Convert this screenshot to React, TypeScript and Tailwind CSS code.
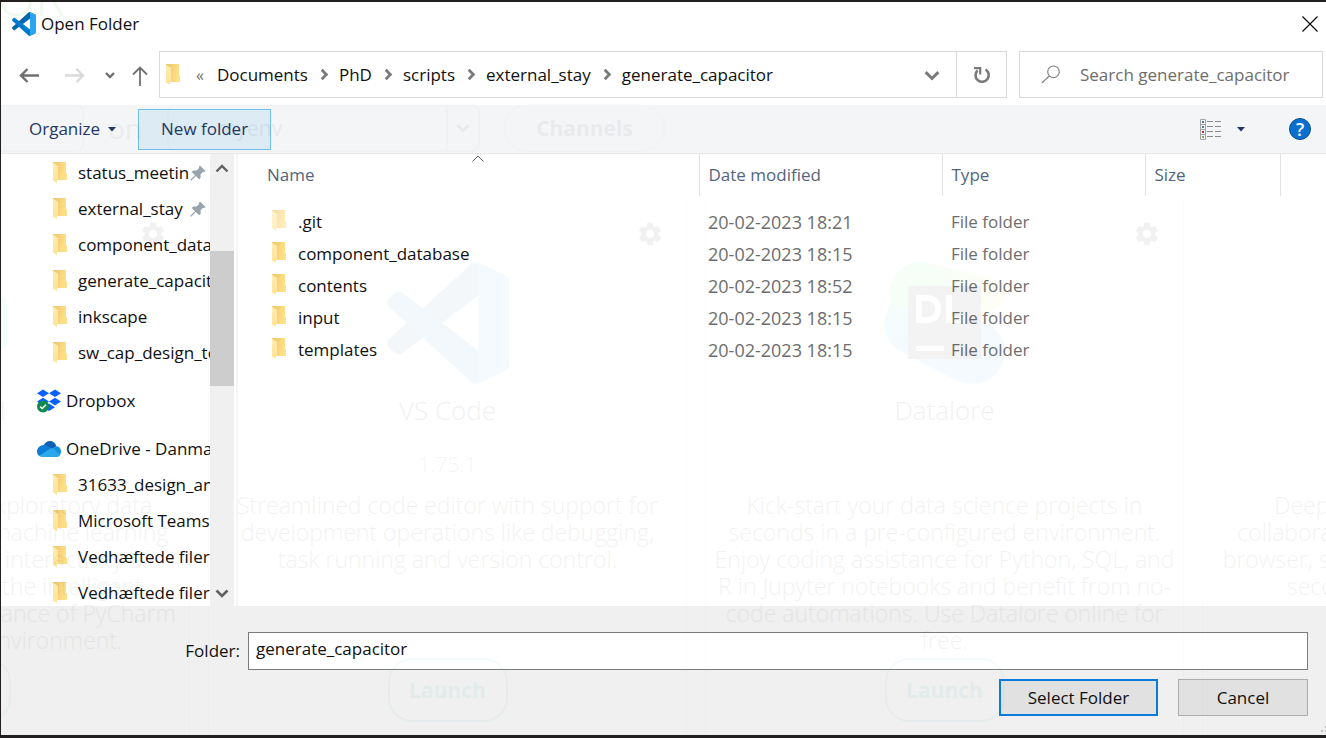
import React from "react";
import { MdSettings } from "react-icons/md";

const crumbs = ["Documents", "PhD", "scripts", "external_stay", "generate_capacitor"];

const quickAccess = [
  { name: "status_meetin", pinned: true },
  { name: "external_stay", pinned: true },
  { name: "component_database", pinned: false },
  { name: "generate_capacitor", pinned: false },
  { name: "inkscape", pinned: false },
  { name: "sw_cap_design_tool", pinned: false },
];

const oneDrive = ["31633_design_and", "Microsoft Teams", "Vedhæftede filer", "Vedhæftede filer"];

const files = [
  { name: ".git", date: "20-02-2023 18:21", hidden: true },
  { name: "component_database", date: "20-02-2023 18:15", hidden: false },
  { name: "contents", date: "20-02-2023 18:52", hidden: false },
  { name: "input", date: "20-02-2023 18:15", hidden: false },
  { name: "templates", date: "20-02-2023 18:15", hidden: false },
];

const apps = [
  {
    name: "DataSpell",
    version: "",
    logo: "dataspell",
    lines: [
      "DataSpell is an IDE for exploratory data",
      "analysis and prototyping machine learning",
      "models. It combines the interactivity of",
      "Jupyter notebooks with the intelligent",
      "Python and R coding assistance of PyCharm",
      "in one user-friendly environment.",
    ],
  },
  {
    name: "VS Code",
    version: "1.75.1",
    logo: "vscode",
    lines: [
      "Streamlined code editor with support for",
      "development operations like debugging,",
      "task running and version control.",
    ],
  },
  {
    name: "Datalore",
    version: "",
    logo: "datalore",
    lines: [
      "Kick-start your data science projects in",
      "seconds in a pre-configured environment.",
      "Enjoy coding assistance for Python, SQL, and",
      "R in Jupyter notebooks and benefit from no-",
      "code automations. Use Datalore online for",
      "free.",
    ],
  },
  {
    name: "Deepnote",
    version: "",
    logo: "none",
    lines: [
      "Deepnote is a notebook built for",
      "collaboration. Create notebooks in your",
      "browser, spin up your own environment in",
      "seconds and share with a link.",
    ],
  },
];

function FolderIcon({ className = "" }: { className?: string }) {
  return (
    <svg className={"h-[21px] w-[14px] shrink-0 " + className} viewBox="0 0 14 21" aria-hidden="true">
      <defs>
        <linearGradient id="folderBack" x1="0" x2="1" y1="0" y2="0.3">
          <stop offset="0" stopColor="#eec666" />
          <stop offset="1" stopColor="#ffe08a" />
        </linearGradient>
        <linearGradient id="folderFlap" x1="0" x2="0" y1="0" y2="1">
          <stop offset="0" stopColor="#ffeab0" />
          <stop offset="1" stopColor="#ffe394" />
        </linearGradient>
      </defs>
      <path d="M0 0h13v11l1 1v6H4L0 16z" fill="url(#folderBack)" />
      <path d="M0 0.5 5 4v13.500H4V21l-4-2.500z" fill="url(#folderFlap)" />
    </svg>
  );
}

function CodeLogo({ className }: { className: string }) {
  return (
    <svg className={className} viewBox="0 0 100 100" aria-hidden="true">
      <path
        fill="#0065A9"
        d="M96.4614 10.7962L75.8569 0.875542C73.4719 -0.272773 70.6217 0.211611 68.75 2.08333L1.29858 63.5832C-0.515693 65.2373 -0.513607 68.0937 1.30308 69.7452L6.81272 74.754C8.29793 76.1042 10.5347 76.2036 12.1338 74.9905L93.3609 13.3699C96.086 11.3026 100 13.2462 100 16.6667V16.4275C100 14.0265 98.6246 11.8378 96.4614 10.7962Z"
      />
      <path
        fill="#007ACC"
        d="M96.4614 89.2038L75.8569 99.1245C73.4719 100.273 70.6217 99.7884 68.75 97.9167L1.29858 36.4169C-0.515693 34.7627 -0.513607 31.9063 1.30308 30.2548L6.81272 25.246C8.29793 23.8958 10.5347 23.7964 12.1338 25.0095L93.3609 86.6301C96.086 88.6974 100 86.7538 100 83.3333V83.5725C100 85.9735 98.6246 88.1621 96.4614 89.2038Z"
      />
      <path
        fill="#2AA5F2"
        d="M75.8578 99.1263C73.4721 100.274 70.6219 99.7885 68.75 97.9166C71.0564 100.223 75 98.5895 75 95.3278V4.67213C75 1.41039 71.0564 -0.223106 68.75 2.08329C70.6219 0.211402 73.4721 -0.273666 75.8578 0.873633L96.4587 10.7807C98.6234 11.8217 100 14.0112 100 16.4132V83.5871C100 85.9891 98.6234 88.1786 96.4586 89.2196L75.8578 99.1263Z"
      />
    </svg>
  );
}

function DataloreLogo() {
  return (
    <svg className="h-[122px] w-[122px]" viewBox="0 0 122 122" aria-hidden="true">
      <defs>
        <linearGradient id="dlTop" x1="0" x2="1" y1="0" y2="0.3">
          <stop offset="0.3" stopColor="#3bea62" />
          <stop offset="1" stopColor="#fff045" />
        </linearGradient>
        <linearGradient id="dlBottom" x1="0" x2="1" y1="0" y2="1">
          <stop offset="0" stopColor="#25d7c8" />
          <stop offset="0.5" stopColor="#3ea8f5" />
        </linearGradient>
      </defs>
      <path d="M6 30C8 10 22-2 42 1l66 14c16 6 18 20 6 29L40 92 8 70z" fill="url(#dlTop)" />
      <path d="M8 42C-4 56-2 76 14 88l58 30c26 12 50-6 49-32-1-10-8-18-18-26z" fill="url(#dlBottom)" />
      <rect x="24" y="24" width="73" height="73" fill="#000" />
      <path
        d="M32 33h10c10 0 15 5 15 14s-5 14-15 14H32zM38 39v16h4c6 0 9-3 9-8s-3-8-9-8zM62 33h6v22h13v6H62zM32 84h28v5H32z"
        fill="#fff"
        fillRule="evenodd"
      />
    </svg>
  );
}

function Chevron({ d, className, width = 3 }: { d: string; className: string; width?: number }) {
  return (
    <svg className={className} viewBox="0 0 14 14" fill="none" stroke="currentColor" strokeWidth={width} aria-hidden="true">
      <path d={d} />
    </svg>
  );
}

function Caret() {
  return (
    <svg className="h-[5px] w-2" viewBox="0 0 8 5" aria-hidden="true">
      <path d="M0 0h8L4 4.500z" fill="#1f3864" />
    </svg>
  );
}

function Pin() {
  return (
    <svg className="absolute right-1 h-4 w-4" viewBox="0 0 16 16" fill="#98a3ad" aria-hidden="true">
      <path d="M10 0.500 15.500 6l-1.500 1.200-1-.4-2.500 2.700.2 3.300-1.500 1.500L5.800 11 1.500 15.500.5 15.500V14.500L5 10.200 1.700 6.900l1.500-1.500 3.300.2L9.200 3 8.800 2z" />
    </svg>
  );
}

function DropboxIcon() {
  return (
    <svg className="h-6 w-6 shrink-0" viewBox="0 0 24 24" aria-hidden="true">
      <g fill="#0a62fe">
        <path d="M6 0.500 12 4.300 6 8.100 0 4.300zM18 0.500 24 4.300 18 8.100 12 4.300zM6 8.800 12 12.600 6 16.400 0 12.600zM18 8.800 24 12.600 18 16.400 12 12.600zM12 14.500 18 18.200 12 22 6 18.200z" />
      </g>
      <circle cx="6" cy="17.500" r="6" fill="#118a4e" />
      <path d="M3.200 17.600 5.200 19.500 9 15.700" fill="none" stroke="#fff" strokeWidth="1.600" />
    </svg>
  );
}

function OneDriveIcon() {
  return (
    <svg className="h-4 w-6 shrink-0" viewBox="0 0 24 16" aria-hidden="true">
      <path d="M6.500 4.500C8 1.500 10 0 12.800 0c3.200 0 5.700 2 6.500 5.200L13 10z" fill="#0f5fb4" />
      <path d="M7 4c2 0 3 .6 4.500 1.500L16 8.300 3 15.200C1 14.500 0 12.800 0 10.700 0 7 3 4 7 4z" fill="#0c7dd6" />
      <path d="M16 8c1-1.800 2.400-2.800 4-2.700 2.400.4 4 2.400 4 5 0 1.600-.5 3-1.500 4z" fill="#1490df" />
      <path d="M2.200 14.800 13.500 7.500c.8-.4 1.800-.3 2.600.2l7 6.200c-.8 1.300-2 2.100-3.600 2.100H5.500c-1.400 0-2.500-.4-3.300-1.200z" fill="#2ba8ea" />
    </svg>
  );
}

function NavFolder({ name, pinned }: { name: string; pinned?: boolean }) {
  return (
    <li>
      <a href="#" className="relative flex h-9 items-center gap-[11px] pl-[52px]">
        <FolderIcon className="-mt-0.5" />
        <span className="whitespace-nowrap">{name}</span>
        {pinned && <Pin />}
      </a>
    </li>
  );
}

function DesktopBehind() {
  return (
    <div aria-hidden="true" className="pointer-events-none absolute inset-0 overflow-hidden font-['Open_Sans',sans-serif]">
      <div className="absolute -top-[30px] -left-1 text-[50px] leading-[50px] font-light text-[#43b02a] opacity-[0.08]">OR</div>
      <div className="absolute top-[102px] -left-0.5 flex h-12 items-center">
        <div className="h-12 w-[85px] rounded-r-lg border-2 border-black/[0.015]" />
        <div className="w-[83px] pl-6 text-[28px] leading-8 opacity-[0.04]">on</div>
        <div className="flex h-12 w-[313px] items-center rounded-lg border-2 border-black/[0.015] pl-12 text-[21px]">
          <span className="flex-1 opacity-[0.05]">myenv</span>
          <span className="flex h-full w-8 items-center justify-center border-l-2 border-black/[0.015]">
            <Chevron d="M2 4.500 7 9.500 12 4.500" className="h-4 w-4 opacity-[0.05]" width={2} />
          </span>
        </div>
        <div className="ml-6 flex h-12 w-[161px] items-center justify-center rounded-full border border-black/[0.02] text-[21px] font-bold">
          <span className="opacity-[0.045]">Channels</span>
        </div>
      </div>
      <div className="absolute top-[196px] bottom-0 left-[-290px] flex">
        {apps.map((app) => (
          <div key={app.name} className="relative mr-[18px] flex w-[479px] shrink-0 flex-col items-center border-x border-black/[0.01] pt-16">
            <MdSettings className="absolute top-[22px] right-[22px] h-7 w-7 opacity-5" />
            <div className="flex h-[122px] items-center opacity-[0.045]">
              {app.logo === "vscode" && <CodeLogo className="h-[122px] w-[122px]" />}
              {app.logo === "datalore" && <DataloreLogo />}
              {app.logo === "dataspell" && <div className="h-[54px] w-[112px] rounded-md bg-[#20d080]" />}
            </div>
            <div className="mt-2.5 h-8 text-[26px] leading-8 font-light opacity-[0.06]">{app.name}</div>
            <div className="mt-6 mb-3.5 h-7 text-[21px] leading-7 font-light opacity-[0.04]">{app.version}</div>
            <div className="h-[162px] text-center text-[23px] leading-[27px] font-light whitespace-nowrap opacity-[0.05]">
              {app.lines.map((line) => (
                <div key={line}>{line}</div>
              ))}
            </div>
            <div className="mt-1 flex h-16 w-[120px] items-center justify-center rounded-3xl border-2 border-[#0097c4]/[0.04] text-[21px] font-bold text-[#0097a4]">
              <span className="opacity-[0.05]">Launch</span>
            </div>
          </div>
        ))}
      </div>
    </div>
  );
}

export default function App() {
  return (
    <div className="relative flex h-screen min-h-[600px] flex-col overflow-hidden border-t-2 border-b-[3px] border-l border-[#221f20] bg-white font-['Open_Sans','Noto_Sans',sans-serif] text-[17px] leading-6 text-[#101010]">
      <header className="flex h-[49px] shrink-0 items-center gap-[5px] pr-2 pb-1.5 pl-[11px]">
        <CodeLogo className="h-6 w-6" />
        <h1 className="flex-1">Open Folder</h1>
        <button aria-label="Close" className="flex h-4 w-4 items-center justify-center">
          <svg className="h-4 w-4" viewBox="0 0 16 16" stroke="#000" strokeWidth="1.100" aria-hidden="true">
            <path d="M.5.5l15 15M15.500.5l-15 15" />
          </svg>
        </button>
      </header>

      <div className="flex h-[47px] shrink-0 items-center pr-[3px] pl-[18px]">
        <button aria-label="Back" className="text-[#707070]">
          <svg className="h-5 w-5" viewBox="0 0 20 20" fill="none" stroke="currentColor" strokeWidth="2.400" aria-hidden="true">
            <path d="M20 10.500H2M8.500 4 2 10.500 8.500 17" />
          </svg>
        </button>
        <button aria-label="Forward" className="ml-[26px] text-[#dadada]">
          <svg className="h-5 w-5" viewBox="0 0 20 20" fill="none" stroke="currentColor" strokeWidth="2.400" aria-hidden="true">
            <path d="M0 10.500h18M11.500 4 18 10.500 11.500 17" />
          </svg>
        </button>
        <button aria-label="Recent locations" className="ml-[18px] text-[#707070]">
          <Chevron d="M3 5 7 9 11 5" className="h-[14px] w-[14px]" width={2.4} />
        </button>
        <button aria-label="Up" className="ml-[13px] text-[#707070]">
          <svg className="mt-0.5 h-5 w-5" viewBox="0 0 20 20" fill="none" stroke="currentColor" strokeWidth="1.800" aria-hidden="true">
            <path d="M10 20V1.500M3 8.500 10 1.500 17 8.500" />
          </svg>
        </button>
        <div className="ml-[9px] flex h-full flex-1 items-center border border-[#d9d9d9] pl-1.5">
          <FolderIcon className="" />
          <span className="ml-4 text-base leading-6 text-[#707070]">«</span>
          <ol className="ml-[13px] flex flex-1 items-center">
            {crumbs.map((c, i) => (
              <li key={c} className="flex items-center">
                {i > 0 && <Chevron d="M4 2 9 7 4 12" className="mr-2 ml-2.5 h-[13px] w-[13px] text-[#7a7a7a]" />}
                <a href="#">{c}</a>
              </li>
            ))}
          </ol>
          <button aria-label="Previous locations" className="mr-4 text-[#7a7a7a]">
            <Chevron d="M1.500 4.500 7 10 12.500 4.500" className="h-4 w-4" width={2.6} />
          </button>
          <button aria-label="Refresh" className="flex h-full w-[50px] items-center justify-center border-l border-[#d9d9d9] text-[#7a7a7a]">
            <svg className="h-[18px] w-[18px]" viewBox="0 0 18 18" fill="none" stroke="currentColor" strokeWidth="2.600" aria-hidden="true">
              <path d="M12.500 3.500A6.600 6.600 0 1 1 4.500 4.500" />
              <path d="M1 2.200H7.200V8.500" strokeWidth="2.200" />
            </svg>
          </button>
        </div>
        <label className="ml-3 flex h-full w-[304px] items-center border border-[#d9d9d9] pl-[21px]">
          <svg className="h-[19px] w-5 shrink-0" viewBox="0 0 20 19" fill="none" stroke="#858585" strokeWidth="1.200" aria-hidden="true">
            <circle cx="12.500" cy="6.800" r="5.800" />
            <path d="M8.300 11 .8 18" />
          </svg>
          <input
            type="search"
            aria-label="Search generate_capacitor"
            placeholder="Search generate_capacitor"
            className="ml-[19px] w-full min-w-0 outline-none placeholder:text-[#6d6d6d]"
          />
        </label>
      </div>

      <div className="mt-[7px] flex h-[49px] shrink-0 items-center border-b border-[#e6e8ec] bg-[#f4f5f7] pr-[15px] pl-7 text-[#1f3864]">
        <button className="flex items-center gap-2">
          Organize <Caret />
        </button>
        <button className="ml-[22px] h-[41px] w-[133px] border border-[#70c0e7] bg-[#dcebf4]">New folder</button>
        <div className="ml-auto flex items-center">
          <button aria-label="Change your view" className="mr-4">
            <svg className="h-[21px] w-[21px]" viewBox="0 0 21 21" fill="none" aria-hidden="true">
              <path d="M.5.5h5v20h-5zM.5 5.500h5M.5 10.500h5M.5 15.500h5" stroke="#a3a3a3" />
              <path d="M7 2.500h6M15 2.500h6M7 7.500h6M15 7.500h6M7 12.500h6M15 12.500h6M7 17.500h6M15 17.500h6" stroke="#8a8a8a" />
              <path d="M2 2h2v2H2z" fill="#4d7a9a" />
              <path d="M2 7h2v2H2z" fill="#4d7a9a" />
              <path d="M2 12h2v2H2z" fill="#c0392b" />
              <path d="M2 17h2v2H2z" fill="#9a9a5a" />
            </svg>
          </button>
          <button aria-label="More options" className="mr-11">
            <Caret />
          </button>
          <button
            aria-label="Get help"
            className="flex h-[22px] w-[22px] items-center justify-center rounded-full border border-[#0b4f8a] bg-[#0b6fcf] text-lg leading-5 font-semibold text-white"
          >
            ?
          </button>
        </div>
      </div>

      <main className="flex min-h-0 flex-1">
        <nav aria-label="Folders" className="flex w-[237px] shrink-0 border-r-2 border-[#f5f5f5]">
          <ul className="min-w-0 flex-1 overflow-hidden pt-px">
            {quickAccess.map((f) => (
              <NavFolder key={f.name} name={f.name} pinned={f.pinned} />
            ))}
            <li>
              <a href="#" className="my-3 flex h-9 items-center gap-[5px] pl-9">
                <DropboxIcon /> Dropbox
              </a>
            </li>
            <li>
              <a href="#" className="flex h-9 items-center gap-[5px] pl-9 whitespace-nowrap">
                <OneDriveIcon /> OneDrive - Danmarks
              </a>
            </li>
            {oneDrive.map((name, i) => (
              <NavFolder key={i} name={name} />
            ))}
          </ul>
          <div className="mr-0.5 flex w-6 flex-col items-center bg-[#f0f0f0] text-[#606060]">
            <Chevron d="M1.500 9.500 7 4 12.500 9.500" className="mt-2 h-[14px] w-[14px] shrink-0" width={2.4} />
            <div className="mt-[75px] h-[135px] w-6 bg-[#cdcdcd]" />
            <Chevron d="M1.500 4.500 7 10 12.500 4.500" className="mt-auto mb-1.5 h-[14px] w-[14px] shrink-0" width={2.6} />
          </div>
        </nav>

        <div className="relative min-w-0 flex-1 overflow-hidden">
          <svg className="absolute top-px left-[234px] h-[7px] w-3" viewBox="0 0 12 7" fill="none" stroke="#606060" aria-hidden="true">
            <path d="M.5 6.500 6 1l5.500 5.500" />
          </svg>
          <table className="w-full table-fixed border-collapse text-left">
            <colgroup>
              <col className="w-[461px]" />
              <col className="w-[243px]" />
              <col className="w-[203px]" />
              <col className="w-[135px]" />
              <col />
            </colgroup>
            <thead className="text-[#53657d]">
              <tr className="h-[42px]">
                <th className="border-r border-[#e2e2e2] pl-[29px] font-normal">Name</th>
                <th className="border-r border-[#e2e2e2] pl-[9px] font-normal">Date modified</th>
                <th className="border-r border-[#e2e2e2] pl-[9px] font-normal">Type</th>
                <th className="border-r border-[#e2e2e2] pl-[9px] font-normal">Size</th>
                <td />
              </tr>
            </thead>
            <tbody className="text-[#6d6d6d] before:block before:h-2.5 before:content-['']">
              {files.map((f) => (
                <tr key={f.name} className="h-8">
                  <td className="pl-[34px] text-[#101010]">
                    <span className="flex items-center gap-3">
                      <FolderIcon className={f.hidden ? "-mt-1 opacity-60" : "-mt-1"} />
                      {f.name}
                    </span>
                  </td>
                  <td className="pl-[9px] text-lg leading-6">{f.date}</td>
                  <td className="pl-[9px]">File folder</td>
                  <td />
                  <td />
                </tr>
              ))}
            </tbody>
          </table>
        </div>
      </main>

      <footer className="flex h-[129px] shrink-0 flex-col gap-[9px] bg-[#f0f0f0] pt-[26px] pr-[18px]">
        <div className="flex h-[38px] items-center">
          <label htmlFor="folder" className="w-[247px] shrink-0 pr-2 text-right">
            Folder:
          </label>
          <input
            id="folder"
            defaultValue="generate_capacitor"
            className="h-full min-w-0 flex-1 border border-[#7a7a7a] bg-white px-[7px] pb-1.5 outline-none"
          />
        </div>
        <div className="flex justify-end gap-5">
          <button className="h-[37px] w-[159px] border-2 border-[#0a7bd8] bg-[#e1e1e1]">Select Folder</button>
          <button className="h-[37px] w-[130px] border border-[#adadad] bg-[#e1e1e1]">Cancel</button>
        </div>
        <svg className="absolute right-0 bottom-0.5 h-2 w-[5px]" viewBox="0 0 5 8" fill="#bdbdbd" aria-hidden="true">
          <path d="M0 5h2v2H0zM4 5h1v2H4zM4 1h1v2H4z" />
        </svg>
      </footer>

      <DesktopBehind />
    </div>
  );
}
